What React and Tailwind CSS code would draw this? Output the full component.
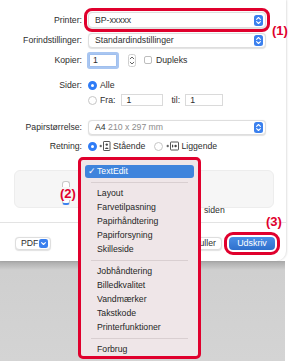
import React from "react";

function BlueStepper() {
  return (
    <svg width="9" height="11" viewBox="0 0 9 11" className="shrink-0">
      <rect width="9" height="11" rx="2.5" fill="#3b80ee" />
      <path d="M2.6 4.3 4.5 2.5 6.4 4.3" stroke="white" strokeWidth="1.1" fill="none" strokeLinecap="round" strokeLinejoin="round" />
      <path d="M2.6 6.7 4.5 8.5 6.4 6.7" stroke="white" strokeWidth="1.1" fill="none" strokeLinecap="round" strokeLinejoin="round" />
    </svg>
  );
}

function Dropdown({ children, h = "h-[15px]" }) {
  return (
    <div className={`flex items-center justify-between w-[178px] ${h} bg-white rounded-[4px] border border-[#dedede] shadow-[0_0.5px_1px_rgba(0,0,0,0.12)] pl-[6px] pr-[2px]`}>
      <span className="leading-none whitespace-nowrap">{children}</span>
      <BlueStepper />
    </div>
  );
}

function Label({ children }) {
  return <div className="w-[83px] text-right pr-[1px] leading-none whitespace-nowrap shrink-0">{children}</div>;
}

function RadioOn() {
  return <span className="block w-[9px] h-[9px] rounded-full border-[3px] border-[#2f7cf6] bg-white shrink-0" />;
}
function RadioOff() {
  return <span className="block w-[9px] h-[9px] rounded-full border border-[#c6c6c6] bg-white shrink-0" />;
}

function SmallStepper() {
  return (
    <svg width="8" height="13" viewBox="0 0 8 13" className="shrink-0">
      <rect x="0.5" y="0.5" width="7" height="12" rx="2" fill="white" stroke="#cfcfcf" />
      <path d="M2.2 4.8 4 3 5.8 4.8" stroke="#555" strokeWidth="0.9" fill="none" strokeLinecap="round" strokeLinejoin="round" />
      <path d="M2.2 8.2 4 10 5.8 8.2" stroke="#555" strokeWidth="0.9" fill="none" strokeLinecap="round" strokeLinejoin="round" />
    </svg>
  );
}

function PortraitIcon() {
  return (
    <svg width="12" height="10" viewBox="0 0 12 10" className="shrink-0">
      <path d="M0.5 5 H3" stroke="#444" strokeWidth="0.9" />
      <path d="M1.75 3.8 V6.2" stroke="#444" strokeWidth="0.9" />
      <rect x="4.5" y="0.5" width="6.5" height="9" rx="0.6" fill="white" stroke="#444" strokeWidth="0.9" />
      <circle cx="7.75" cy="3.6" r="1.2" fill="#444" />
      <path d="M5.8 8 Q7.75 5.2 9.7 8 Z" fill="#444" />
    </svg>
  );
}

function LandscapeIcon() {
  return (
    <svg width="13" height="10" viewBox="0 0 13 10" className="shrink-0">
      <path d="M0.5 5 H3" stroke="#444" strokeWidth="0.9" />
      <path d="M1.75 3.8 V6.2" stroke="#444" strokeWidth="0.9" />
      <rect x="4.5" y="1" width="8" height="8" rx="0.6" fill="white" stroke="#444" strokeWidth="0.9" />
      <circle cx="9.6" cy="5" r="1.2" fill="#444" />
      <path d="M6 3.2 Q8.8 5 6 6.8 Z" fill="#444" />
    </svg>
  );
}

function MenuItem({ children }) {
  return <div className="h-[14px] flex items-center pl-[16px] leading-none whitespace-nowrap text-[#262626]">{children}</div>;
}

function MenuSep() {
  return (
    <div className="h-[8px] flex items-center px-[10px]">
      <div className="w-full h-px bg-[#d9cfd1]" />
    </div>
  );
}

export default function App() {
  return (
    <div className="relative w-[292px] h-[361px] bg-white overflow-hidden font-['Liberation_Sans',Arial,sans-serif] text-[8.7px] text-[#2e2e2e]">
      {/* Window */}
      <div className="relative z-10 w-[286px] h-[261px] bg-white rounded-br-[10px] shadow-[1px_0_2px_rgba(0,0,0,0.12)] flex flex-col pt-[9px]">
        {/* Printer */}
        <div className="flex items-center h-[22px]">
          <Label>Printer:</Label>
          <div className="ml-[5px] rounded-[4px] outline-[3px] outline-solid outline-[#e0002d] outline-offset-[1px]">
            <Dropdown h="h-[16px]">BP-xxxxx</Dropdown>
          </div>
        </div>
        {/* Forindstillinger */}
        <div className="flex items-center h-[18px]">
          <Label>Forindstillinger:</Label>
          <div className="ml-[5px]">
            <Dropdown>Standardindstillinger</Dropdown>
          </div>
        </div>
        {/* Kopier */}
        <div className="flex items-center h-[18px] mt-[2px]">
          <Label>Kopier:</Label>
          <div className="ml-[6px] w-[28px] h-[13px] bg-white border border-[#9fbfee] ring-2 ring-[#a9c6f1] rounded-[1px] flex items-center pl-[3px] leading-none">1</div>
          <div className="ml-[11px]"><SmallStepper /></div>
          <span className="ml-[8px] block w-[8px] h-[8px] rounded-[2px] border border-[#bdbdbd] bg-white" />
          <span className="ml-[4px] leading-none">Dupleks</span>
        </div>
        {/* Sider */}
        <div className="flex items-center h-[16px] mt-[8px]">
          <Label>Sider:</Label>
          <div className="ml-[5px]"><RadioOn /></div>
          <span className="ml-[3px] leading-none">Alle</span>
        </div>
        <div className="flex items-center h-[14px]">
          <div className="w-[83px] shrink-0" />
          <div className="ml-[5px]"><RadioOff /></div>
          <span className="ml-[3px] leading-none">Fra:</span>
          <div className="ml-[6px] w-[42px] h-[12px] bg-white border border-[#dadada] flex items-center pl-[4px] leading-none">1</div>
          <span className="ml-[8px] leading-none">til:</span>
          <div className="ml-[5px] w-[38px] h-[12px] bg-white border border-[#dadada] flex items-center pl-[4px] leading-none">1</div>
        </div>
        {/* Papirstørrelse */}
        <div className="flex items-center h-[16px] mt-[12px]">
          <Label>Papirstørrelse:</Label>
          <div className="ml-[5px]">
            <Dropdown>
              A4 <span className="text-[#8c8c8c]">210 x 297 mm</span>
            </Dropdown>
          </div>
        </div>
        {/* Retning */}
        <div className="flex items-center h-[16px] mt-[3px]">
          <Label>Retning:</Label>
          <div className="ml-[5px]"><RadioOn /></div>
          <div className="ml-[2px]"><PortraitIcon /></div>
          <span className="ml-[2px] leading-none">Stående</span>
          <div className="ml-[9px]"><RadioOff /></div>
          <div className="ml-[3px]"><LandscapeIcon /></div>
          <span className="ml-[2px] leading-none">Liggende</span>
        </div>
        {/* Gray box */}
        <div className="relative mt-[16px] ml-[14px] w-[260px] h-[38px] bg-[#f6f6f6] border border-[#ededed] rounded-[6px] flex items-start pt-[10px] pl-[47px]">
          <div className="w-[8px] h-[24px] rounded-[3px] border border-[#c9c9c9] border-b-[2px] border-b-[#3b80ee] bg-white shrink-0" />
          <span className="ml-[134px] mt-[25px] leading-none">siden</span>
          <span className="absolute left-[44px] top-[16px] px-[1px] bg-[#f6f6f6] text-[13px] font-bold leading-none text-[#e0002d]">(2)</span>
        </div>
        {/* Separator */}
        <div className="mt-[14px] h-px bg-[#e3e3e3]" />
        {/* Bottom bar */}
        <div className="mt-[14px] flex items-center h-[13px] pl-[15px] pr-[11px]">
          <div className="flex items-center h-[13px] w-[36px] bg-white rounded-[4px] border border-[#dedede] shadow-[0_0.5px_1px_rgba(0,0,0,0.12)] pl-[5px] pr-[2px] justify-between">
            <span className="leading-none">PDF</span>
            <svg width="9" height="9" viewBox="0 0 9 9">
              <rect width="9" height="9" rx="2.2" fill="#3b80ee" />
              <path d="M2.6 3.6 4.5 5.5 6.4 3.6" stroke="white" strokeWidth="1.1" fill="none" strokeLinecap="round" strokeLinejoin="round" />
            </svg>
          </div>
          <div className="ml-auto flex items-center justify-center h-[13px] w-[44px] bg-white rounded-[4px] border border-[#dedede] shadow-[0_0.5px_1px_rgba(0,0,0,0.12)] leading-none">Annuller</div>
          <div className="ml-[7px] rounded-[4px] outline-[3px] outline-solid outline-[#e0002d] outline-offset-[2px]">
            <div className="flex items-center justify-center h-[13px] w-[46px] rounded-[4px] bg-[linear-gradient(to_bottom,#4a8ee6,#2f70cc)] text-white leading-none text-[8.9px]">Udskriv</div>
          </div>
        </div>
        {/* Annotations */}
        <span className="absolute left-[272px] top-[24px] text-[13px] font-bold leading-none text-[#e0002d]">(1)</span>
        <span className="absolute left-[266px] top-[215px] text-[13px] font-bold leading-none text-[#e0002d]">(3)</span>
      </div>

      {/* Background below window */}
      <div className="w-[285px] h-[100px] bg-[linear-gradient(to_bottom,#a8a8a8,#cfcfcf_9px,#d4d4d4)]" />

      {/* Popup menu */}
      <div className="absolute z-20 left-[78px] top-[157px] w-[123px] h-[202px] border-[3px] border-[#e0002d] rounded-[5px] bg-[#efe6e8] pt-[5px] px-[4px] overflow-hidden">
        <div className="h-[13px] rounded-[3px] bg-[#3f84dc] text-white flex items-center pl-[3px] leading-none whitespace-nowrap">
          <span className="w-[9px]">✓</span>
          <span>TextEdit</span>
        </div>
        <div className="-mx-[4px]">
          <MenuSep />
          <MenuItem>Layout</MenuItem>
          <MenuItem>Farvetilpasning</MenuItem>
          <MenuItem>Papirhåndtering</MenuItem>
          <MenuItem>Papirforsyning</MenuItem>
          <MenuItem>Skilleside</MenuItem>
          <MenuSep />
          <MenuItem>Jobhåndtering</MenuItem>
          <MenuItem>Billedkvalitet</MenuItem>
          <MenuItem>Vandmærker</MenuItem>
          <MenuItem>Takstkode</MenuItem>
          <MenuItem>Printerfunktioner</MenuItem>
          <MenuSep />
          <MenuItem>Forbrug</MenuItem>
        </div>
      </div>
    </div>
  );
}
